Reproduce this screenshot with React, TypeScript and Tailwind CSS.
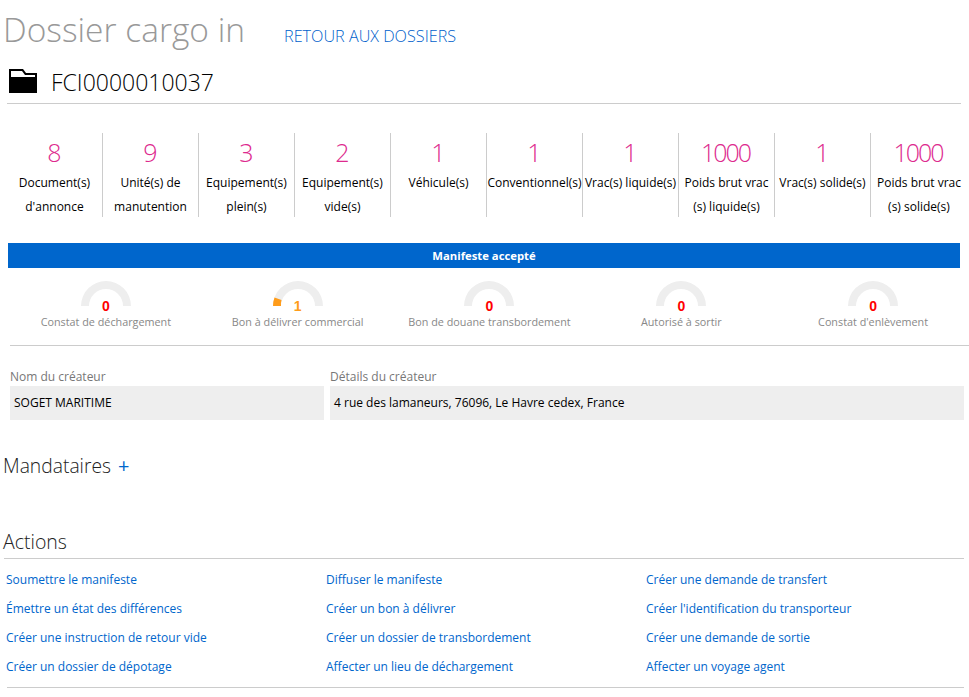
import React from 'react';

type Stat = { value: string; label: string };

const stats: Stat[] = [
    { value: '8', label: "Document(s) d'annonce" },
    { value: '9', label: 'Unité(s) de manutention' },
    { value: '3', label: 'Equipement(s) plein(s)' },
    { value: '2', label: 'Equipement(s) vide(s)' },
    { value: '1', label: 'Véhicule(s)' },
    { value: '1', label: 'Conventionnel(s)' },
    { value: '1', label: 'Vrac(s) liquide(s)' },
    { value: '1000', label: 'Poids brut vrac (s) liquide(s)' },
    { value: '1', label: 'Vrac(s) solide(s)' },
    { value: '1000', label: 'Poids brut vrac (s) solide(s)' },
];

const gauges = [
    { label: 'Constat de déchargement', value: 0 },
    { label: 'Bon à délivrer commercial', value: 1 },
    { label: 'Bon de douane transbordement', value: 0 },
    { label: 'Autorisé à sortir', value: 0 },
    { label: "Constat d'enlèvement", value: 0 },
];

const actions = [
    'Soumettre le manifeste',
    'Diffuser le manifeste',
    'Créer une demande de transfert',
    'Émettre un état des différences',
    'Créer un bon à délivrer',
    "Créer l'identification du transporteur",
    'Créer une instruction de retour vide',
    'Créer un dossier de transbordement',
    'Créer une demande de sortie',
    'Créer un dossier de dépotage',
    'Affecter un lieu de déchargement',
    'Affecter un voyage agent',
];

const Gauge = ({ label, value }: { label: string; value: number }) => (
    <div className="flex w-[192px] flex-col items-center">
        <div className="relative h-[25px] w-[50px]">
            <svg width="50" height="25" viewBox="0 0 50 25" className="block">
                <path d="M0 25 A25 25 0 0 1 50 25 L42 25 A17 17 0 0 0 8 25 Z" fill="#eeeeee" />
                {value > 0 && <path d="M0 25 A25 25 0 0 1 1.5 16.6 L8.5 19 A17 17 0 0 0 8 25 Z" fill="#ff9c1a" />}
            </svg>
            <span className={`absolute bottom-[-8px] left-0 w-full text-center text-[14px] leading-[16px] font-bold font-['Liberation_Sans',sans-serif] ${value > 0 ? 'text-[#ff9c1a]' : 'text-[#ff0000]'}`}>
                {value}
            </span>
        </div>
        <div className="mt-[8px] text-[10.8px] leading-[16px] whitespace-nowrap text-[#888888]">{label}</div>
    </div>
);

export default function App() {
    return (
        <div className="h-[697px] w-[969px] overflow-hidden bg-white font-['Open_Sans',sans-serif] text-black">
            <div className="flex h-[60px] items-start pl-[3px]">
                <h1 className="text-[33.5px] leading-[59px] font-light text-[#999999]">Dossier cargo in</h1>
                <a className="ml-[39px] mt-[24px] text-[16.2px] leading-[24px] font-light text-[#005fcc]">RETOUR AUX DOSSIERS</a>
            </div>

            <div className="ml-[7px] mr-[8px] flex h-[44px] items-center border-b border-[#cccccc] pl-[2px]">
                <svg width="28" height="24" viewBox="0 0 28 24" className="mb-[2px] block">
                    <path d="M0 0H14L17 4H28V24H0Z" fill="#000" />
                    <path d="M2 2H13L16 6H26V8H2Z" fill="#fff" />
                </svg>
                <span className="ml-[14px] text-[23px] leading-[32px] font-light">FCI0000010037</span>
            </div>

            <div className="mt-[29px] ml-[7px] flex h-[84px]">
                {stats.map((s, i) => (
                    <div key={i} className={`w-[96px] text-center ${i < 9 ? 'border-r border-[#cccccc]' : ''}`}>
                        <div className="h-[38px] pr-[2px] text-[25px] leading-[39px] font-light tracking-[-2px] text-[#dd2a8e]">{s.value}</div>
                        <div className="text-[12px] leading-[24px]">{s.label}</div>
                    </div>
                ))}
            </div>

            <div className="mt-[26px] ml-[8px] h-[25px] w-[952px] bg-[#0066cc] text-center text-[11.3px] leading-[25px] font-bold text-white">
                Manifeste accepté
            </div>

            <div className="mt-[13px] ml-[10px] flex">
                {gauges.map((g) => (
                    <Gauge key={g.label} label={g.label} value={g.value} />
                ))}
            </div>

            <div className="mt-[15px] ml-[10px] border-t border-[#cccccc]" />

            <div className="mt-[22px] ml-[10px] flex gap-[6px]">
                <div className="w-[314px]">
                    <div className="text-[12px] leading-[18px] text-[#777777]">Nom du créateur</div>
                    <div className="h-[34px] bg-[#eeeeee] pl-[4px] text-[12px] leading-[34px]">SOGET MARITIME</div>
                </div>
                <div className="w-[634px]">
                    <div className="text-[12px] leading-[18px] text-[#777777]">Détails du créateur</div>
                    <div className="h-[34px] bg-[#eeeeee] pl-[4px] text-[12px] leading-[34px]">
                        4 rue des lamaneurs, 76096, Le Havre cedex, France
                    </div>
                </div>
            </div>

            <div className="mt-[32px] flex items-center pl-[3px]">
                <span className="text-[19.3px] leading-[28px] font-light text-[#222222]">Mandataires</span>
                <span className="ml-[7px] text-[20px] leading-[28px] text-[#0066cc]">+</span>
            </div>

            <div className="mt-[45px] ml-[4px] mr-[5px] border-b border-[#cccccc] text-[19.5px] font-light text-[#222222]">
                <div className="-ml-[1px] h-[33px] leading-[33px]">Actions</div>
            </div>

            <div className="ml-[6px] grid grid-cols-[320px_320px_320px] pt-[6px]">
                {actions.map((a) => (
                    <a key={a} className="h-[29px] text-[12px] leading-[29px] whitespace-nowrap text-[#0066cc]">
                        {a}
                    </a>
                ))}
            </div>

            <div className="mt-[6px] ml-[7px] mr-[5px] border-t border-[#cccccc]" />
        </div>
    );
}
